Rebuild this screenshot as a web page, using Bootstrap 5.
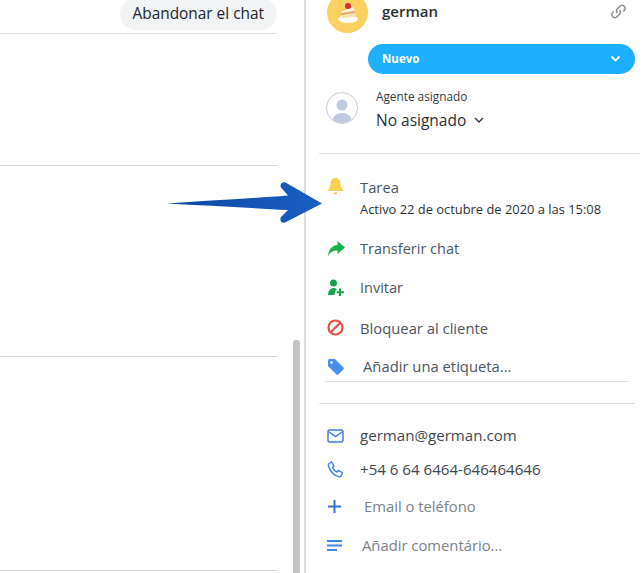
<!DOCTYPE html>
<html lang="es">
<head>
<meta charset="utf-8">
<title>Chat</title>
<link href="https://cdn.jsdelivr.net/npm/bootstrap@5.3.0/dist/css/bootstrap.min.css" rel="stylesheet">
<style>
html,body{height:573px;overflow:hidden;background:#fff}
body{font-family:"Open Sans","Noto Sans",sans-serif;color:#424d57;font-size:14.8px;position:relative}
.stage{height:573px}
.leftpane{width:306px;border-right:2px solid #dcdcdc;flex:none;padding-right:27px}
.topbar{height:34px;border-bottom:1px solid #dedede}
.leave{background:#f1f3f4;color:#22272c;border-radius:16px;font-size:15.4px;line-height:32px;height:32px;padding:0 13px;margin-top:-2px;border:0}
.blk1{height:132px;border-bottom:1px solid #d6d6d6}
.blk2{height:191px;border-bottom:1px solid #d6d6d6}
.blk3{height:214px;border-bottom:1px solid #d6d6d6}
.rightpane{min-width:0;flex:1;padding-left:13px}
.contact{padding-left:8px;height:44px;margin-top:-8px;padding-right:16px}
.ava{width:41px;height:41px;border-radius:50%;background:#fdd161;flex:none;margin-right:14px}
.cname{font-size:15px;font-weight:600;color:#2a2f35;line-height:20px;padding-top:9px}
.linkic{margin-top:11px}
.statuspill{margin-left:49px;margin-right:8px;height:30px;background:#1eb0fc;border-radius:15px;color:#fff;font-weight:700;font-size:11.5px;padding:0 14px;margin-top:8px}
.agent{margin-top:18px;height:62px;border-bottom:1px solid #dedede;margin-right:3px;padding-left:7px}
.agentava{width:32px;height:32px;border-radius:50%;border:1px solid #c7ccd6;overflow:hidden;flex:none;margin-right:18px}
.alabel{font-size:11.8px;line-height:14px;color:#353b42;margin-top:-3px}
.avalue{font-size:15.5px;line-height:22px;color:#2b3036;margin-top:6px}
.actions{padding-left:8px;padding-top:22px}
.arow{height:39.500px;color:#4d565f;font-size:14.5px}
.arow.blockrow{font-size:14.8px}
.ticon{width:33px;flex:none;display:flex;align-items:center}
.belltop{align-items:flex-start;padding-top:1px}
.tarea{height:44px;margin-bottom:9px}
.tarea .sub{font-size:12.9px;line-height:22px;color:#2e3338}
.tarea .ttl{line-height:22px;color:#4d565f}
.tagrow{height:36px;margin-left:-2px;border-bottom:1px solid #dedede;margin-right:15px;padding-left:2px;padding-top:6px;margin-top:-2px}
.tagrow span,.addrow span{color:#4d565f}
.tagrow .ticon{width:36px}
.divider{border-top:1px solid #dedede;margin:21px 8px 0 0}
.contactlist{padding-left:8px;padding-top:15px}
.crow{height:34px;color:#3f474f;font-size:15.1px}
.addrow{height:39px}
.addrow .ticon{width:37px}
.addrow .cmt{width:35px}
.addrow span{color:#7a828a}
.threadbar{position:absolute;left:293px;top:340px;width:7px;height:233px;background:#c4c4c4;border-radius:3px 3px 0 0}
.callout{position:absolute;left:166px;top:180px}
</style>
</head>
<body>
<div class="stage d-flex">
  <div class="leftpane">
    <div class="topbar d-flex justify-content-end align-items-start">
      <button type="button" class="leave">Abandonar el chat</button>
    </div>
    <div class="blk1"></div>
    <div class="blk2"></div>
    <div class="blk3"></div>
  </div>
  <div class="rightpane">
    <div class="contact d-flex align-items-start">
      <div class="ava d-flex align-items-center justify-content-center">
        <svg width="26" height="26" viewBox="0 0 26 26"><ellipse cx="13" cy="19" rx="10" ry="4" fill="#fff"/><path d="M6 13l12-5 2 3v6l-13 1z" fill="#f6e3b0"/><path d="M6 13l14-2v2l-14 2z" fill="#e9a96b"/><path d="M6 12l12-5 2 3-14 3z" fill="#fff8e8"/><circle cx="13" cy="6" r="3" fill="#d7263d"/></svg>
      </div>
      <div class="cname flex-grow-1">german</div>
      <svg class="linkic" width="17" height="17" viewBox="0 0 16 16" fill="none" stroke="#8f8f8f" stroke-width="1.400"><path d="M7 9.500a3 3 0 0 1 0-4l3-3a3 3 0 0 1 4 4l-1.500 1.500"/><path d="M9 6.500a3 3 0 0 1 0 4l-3 3a3 3 0 0 1-4-4L3.500 8"/></svg>
    </div>
    <div class="statuspill d-flex align-items-center justify-content-between">
      <span>Nuevo</span>
      <svg width="11" height="8" viewBox="0 0 11 8" fill="none" stroke="#fff" stroke-width="1.800"><path d="M1.500 1.500l4 4 4-4"/></svg>
    </div>
    <div class="agent d-flex align-items-start">
      <div class="agentava">
        <svg width="30" height="30" viewBox="0 0 30 30"><circle cx="15" cy="12" r="5.500" fill="#c0cbe0"/><ellipse cx="15" cy="27" rx="9.500" ry="7" fill="#c0cbe0"/></svg>
      </div>
      <div>
        <div class="alabel">Agente asignado</div>
        <div class="avalue d-flex align-items-center gap-2">No asignado
          <svg width="10" height="7" viewBox="0 0 10 7" fill="none" stroke="#33383e" stroke-width="1.400"><path d="M1 1l4 4 4-4"/></svg>
        </div>
      </div>
    </div>
    <div class="actions">
      <div class="tarea d-flex">
        <div class="ticon belltop">
          <svg width="17" height="18" viewBox="0 0 17 18"><path d="M8.500 1c3.500 0 5 2.600 5 5.500 0 3.500 1.200 5 2.500 6.500v1H1v-1c1.300-1.500 2.500-3 2.500-6.500C3.500 3.600 5 1 8.500 1z" fill="#fdd150"/><path d="M6.700 15.500h3.600a1.800 1.800 0 0 1-3.600 0z" fill="#f5b93a"/></svg>
        </div>
        <div><div class="ttl">Tarea</div><div class="sub">Activo 22 de octubre de 2020 a las 15:08</div></div>
      </div>
      <div class="arow d-flex align-items-center">
        <div class="ticon"><svg width="18" height="16" viewBox="0 0 18 16"><path d="M10.500 0L18 6.500 10.500 13V9.500C6 9.500 3 11 1 15.500 1.300 9.500 4.500 4.500 10.500 4z" fill="#16b24b"/></svg></div>
        <span>Transferir chat</span>
      </div>
      <div class="arow d-flex align-items-center">
        <div class="ticon"><svg width="18" height="18" viewBox="0 0 18 18"><circle cx="6.500" cy="4" r="3.500" fill="#16a34a"/><path d="M1 16c0-4 2.500-7 5.500-7 1.500 0 2.700.5 3.500 1.500-1.500 1-2.500 2.500-2.500 5.500z" fill="#16a34a"/><path d="M13 9.500v7.500M9.500 13.200h7.500" stroke="#16a34a" stroke-width="2"/></svg></div>
        <span>Invitar</span>
      </div>
      <div class="arow blockrow d-flex align-items-center">
        <div class="ticon"><svg width="17" height="17" viewBox="0 0 17 17" fill="none" stroke="#e8503f" stroke-width="2.200"><circle cx="8.500" cy="8.500" r="7"/><path d="M3.700 13.300L13.300 3.700"/></svg></div>
        <span>Bloquear al cliente</span>
      </div>
      <div class="tagrow d-flex align-items-center">
        <div class="ticon"><svg width="17" height="17" viewBox="0 0 17 17"><path d="M1 2.500A1.500 1.500 0 0 1 2.500 1H8l8.500 8.500a1.500 1.500 0 0 1 0 1.800l-5.200 5.200a1.500 1.500 0 0 1-1.800 0L1 8z" fill="#4a8fee"/><circle cx="4.500" cy="4.500" r="1.200" fill="#fff"/></svg></div>
        <span>Añadir una etiqueta...</span>
      </div>
    </div>
    <div class="divider"></div>
    <div class="contactlist">
      <div class="crow d-flex align-items-center">
        <div class="ticon"><svg width="17" height="14" viewBox="0 0 17 14" fill="none" stroke="#3d7fdc" stroke-width="1.500"><rect x="1" y="1" width="15" height="12" rx="2"/><path d="M2 3l6.500 4.500L15 3"/></svg></div>
        <span>german@german.com</span>
      </div>
      <div class="crow d-flex align-items-center">
        <div class="ticon"><svg width="17" height="17" viewBox="0 0 17 17" fill="none" stroke="#3d7fdc" stroke-width="1.400"><path d="M2 2.500L4.500 1l2.500 4-1.500 1.500c.8 2 2.300 3.500 4.500 4.500L11.500 9.500l4 2.500-1.500 3c-.5.700-1.500 1-2.500.7C6 14 3 10 1.500 5c-.2-1 0-2 .5-2.500z"/></svg></div>
        <span>+54 6 64 6464-646464646</span>
      </div>
      <div class="addrow d-flex align-items-center">
        <div class="ticon"><svg width="15" height="15" viewBox="0 0 15 15" stroke="#3574d4" stroke-width="2"><path d="M7.500 1v13M1 7.500h13"/></svg></div>
        <span>Email o teléfono</span>
      </div>
      <div class="addrow d-flex align-items-center">
        <div class="ticon cmt"><svg width="15" height="13" viewBox="0 0 15 13" stroke="#3f86ea" stroke-width="2"><path d="M0 2h15M0 6.500h15M0 11h10"/></svg></div>
        <span>Añadir comentário...</span>
      </div>
    </div>
  </div>
</div>
<div class="threadbar"></div>
<svg class="callout" width="160" height="46" viewBox="0 0 160 46" aria-hidden="true">
  <defs><linearGradient id="ag" x1="0" x2="1" y1="0" y2="0"><stop offset="0" stop-color="#0d47a1"/><stop offset="1" stop-color="#1a5fc4"/></linearGradient></defs>
  <path d="M1 23.500C40 20.500 85 18.500 122 15.500L115 7.500c-1.500-3 1-6 4.500-5L156 23.500 120 42c-4 2-7-1-5-5l7-7C85 28 40 25.500 1 23.500z" fill="url(#ag)"/>
</svg>
</body>
</html>
